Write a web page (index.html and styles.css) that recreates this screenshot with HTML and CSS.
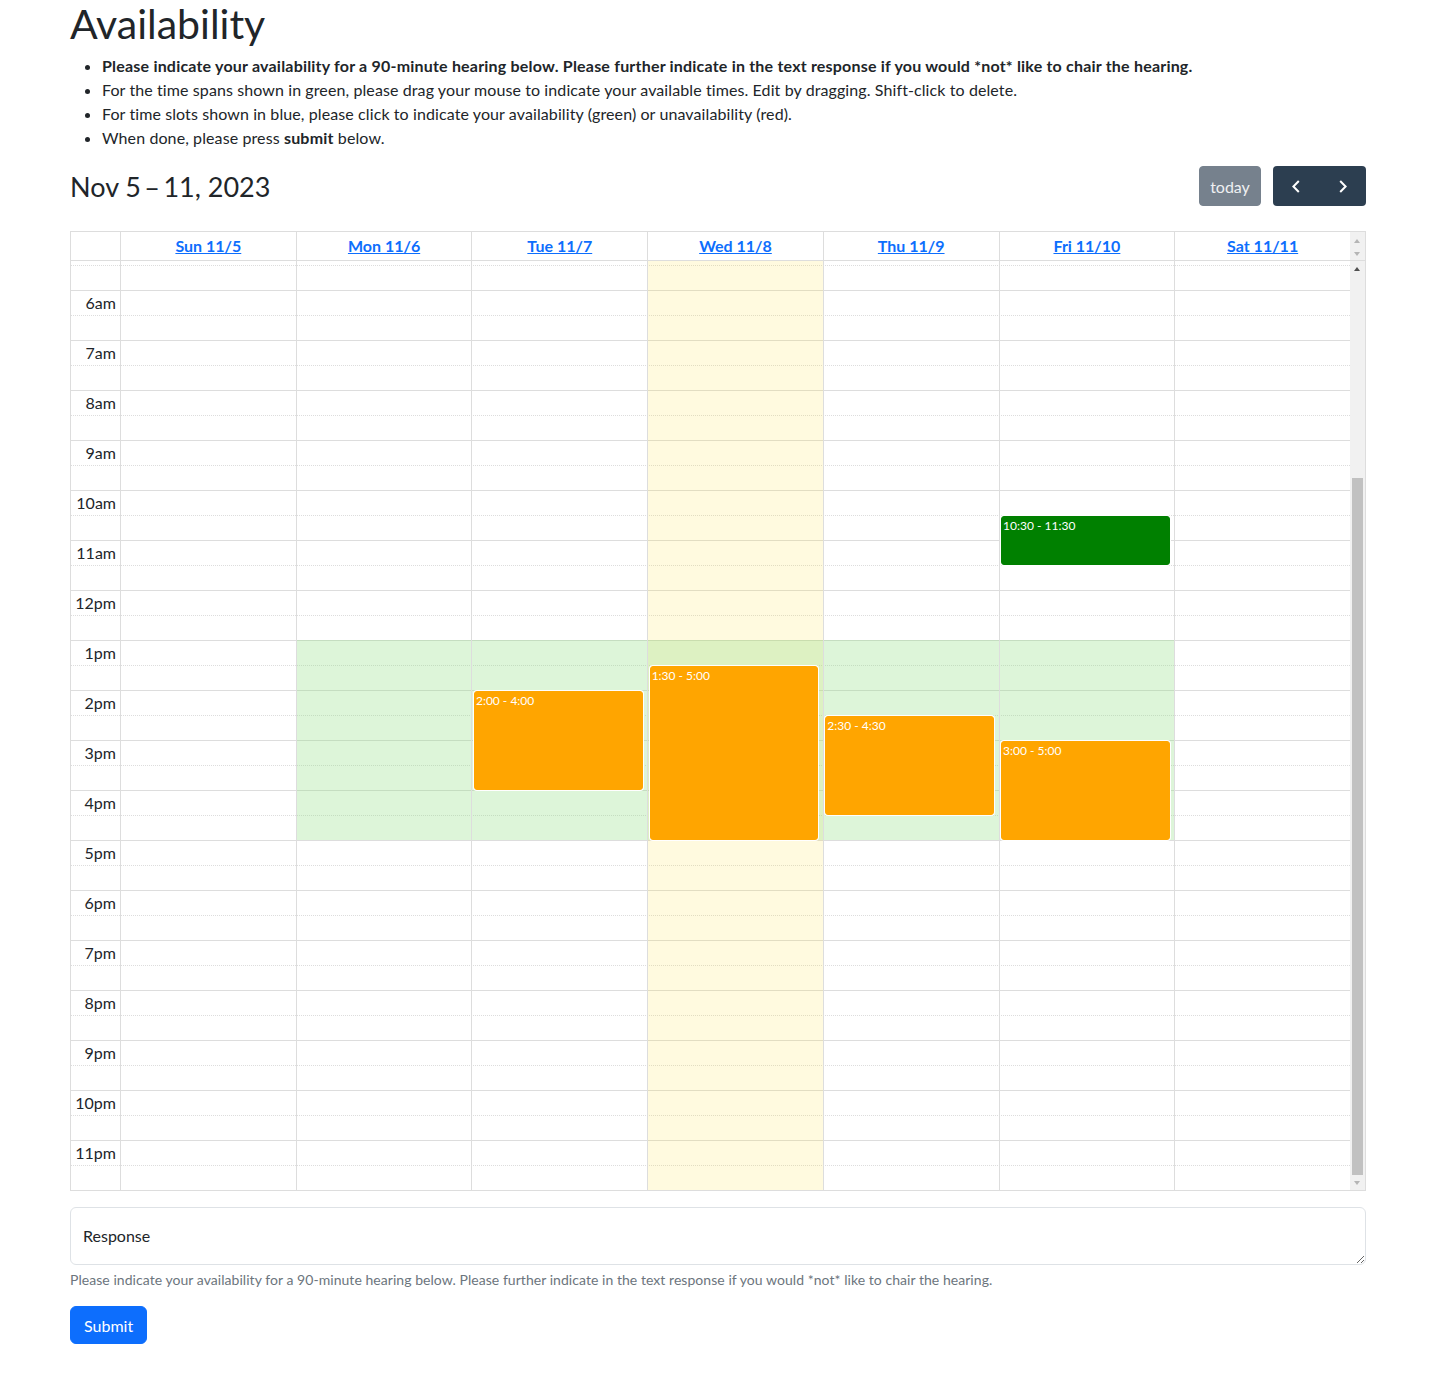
FILE: index.html
```html
<!DOCTYPE html>
<html lang="en">
<head>
<meta charset="utf-8">
<title>Availability</title>
<link rel="stylesheet" href="styles.css">
</head>
<body>
<div class="page">
  <h1 class="title">Availability</h1>
  <ul class="instructions">
    <li><strong>Please indicate your availability for a 90-minute hearing below. Please further indicate in the text response if you would *not* like to chair the hearing.</strong></li>
    <li>For the time spans shown in green, please drag your mouse to indicate your available times. Edit by dragging. Shift-click to delete.</li>
    <li>For time slots shown in blue, please click to indicate your availability (green) or unavailability (red).</li>
    <li>When done, please press <strong>submit</strong> below.</li>
  </ul>

  <div class="toolbar">
    <h2 class="range">Nov 5&thinsp;–&thinsp;11, 2023</h2>
    <div class="tb-right">
      <button class="btn-today" type="button">today</button>
      <div class="btn-group">
        <button class="btn-nav" type="button" aria-label="prev"><svg width="8" height="13" viewBox="0 0 8 13"><path d="M6.8 1 L1.4 6.5 L6.8 12" fill="none" stroke="#fff" stroke-width="2"/></svg></button>
        <button class="btn-nav" type="button" aria-label="next"><svg width="8" height="13" viewBox="0 0 8 13"><path d="M1.2 1 L6.6 6.5 L1.2 12" fill="none" stroke="#fff" stroke-width="2"/></svg></button>
      </div>
    </div>
  </div>

  <div class="cal">
    <div class="cal-head">
      <div class="hcell axis"></div>
      <div class="hcell"><a href="#">Sun 11/5</a></div>
      <div class="hcell"><a href="#">Mon 11/6</a></div>
      <div class="hcell"><a href="#">Tue 11/7</a></div>
      <div class="hcell"><a href="#">Wed 11/8</a></div>
      <div class="hcell"><a href="#">Thu 11/9</a></div>
      <div class="hcell"><a href="#">Fri 11/10</a></div>
      <div class="hcell"><a href="#">Sat 11/11</a></div>
      <div class="hstub"><span class="arr up light"></span><span class="arr down light"></span></div>
    </div>
    <div class="cal-body">
      <div class="scroller">
        <div class="slots">
          <div class="slot hour"></div>
          <div class="slot half"></div>
          <div class="slot hour"><span class="lbl">6am</span></div>
          <div class="slot half"></div>
          <div class="slot hour"><span class="lbl">7am</span></div>
          <div class="slot half"></div>
          <div class="slot hour"><span class="lbl">8am</span></div>
          <div class="slot half"></div>
          <div class="slot hour"><span class="lbl">9am</span></div>
          <div class="slot half"></div>
          <div class="slot hour"><span class="lbl">10am</span></div>
          <div class="slot half"></div>
          <div class="slot hour"><span class="lbl">11am</span></div>
          <div class="slot half"></div>
          <div class="slot hour"><span class="lbl">12pm</span></div>
          <div class="slot half"></div>
          <div class="slot hour"><span class="lbl">1pm</span></div>
          <div class="slot half"></div>
          <div class="slot hour"><span class="lbl">2pm</span></div>
          <div class="slot half"></div>
          <div class="slot hour"><span class="lbl">3pm</span></div>
          <div class="slot half"></div>
          <div class="slot hour"><span class="lbl">4pm</span></div>
          <div class="slot half"></div>
          <div class="slot hour"><span class="lbl">5pm</span></div>
          <div class="slot half"></div>
          <div class="slot hour"><span class="lbl">6pm</span></div>
          <div class="slot half"></div>
          <div class="slot hour"><span class="lbl">7pm</span></div>
          <div class="slot half"></div>
          <div class="slot hour"><span class="lbl">8pm</span></div>
          <div class="slot half"></div>
          <div class="slot hour"><span class="lbl">9pm</span></div>
          <div class="slot half"></div>
          <div class="slot hour"><span class="lbl">10pm</span></div>
          <div class="slot half"></div>
          <div class="slot hour"><span class="lbl">11pm</span></div>
          <div class="slot half"></div>
        </div>
        <div class="cols">
          <div class="col-axis"></div>
          <div class="col"></div>
          <div class="col">
            <div class="bg-green" style="top:379px;height:200px"></div>
          </div>
          <div class="col">
            <div class="bg-green" style="top:379px;height:200px"></div>
            <div class="ev orange" style="top:430px;height:99px">2:00 - 4:00</div>
          </div>
          <div class="col today">
            <div class="bg-green" style="top:379px;height:200px"></div>
            <div class="ev orange" style="top:405px;height:174px">1:30 - 5:00</div>
          </div>
          <div class="col">
            <div class="bg-green" style="top:379px;height:200px"></div>
            <div class="ev orange" style="top:455px;height:99px">2:30 - 4:30</div>
          </div>
          <div class="col">
            <div class="bg-green" style="top:379px;height:200px"></div>
            <div class="ev green" style="top:255px;height:49px">10:30 - 11:30</div>
            <div class="ev orange" style="top:480px;height:99px">3:00 - 5:00</div>
          </div>
          <div class="col"></div>
        </div>
      </div>
      <div class="sb">
        <div class="sb-btn"><span class="arr up dark"></span></div>
        <div class="sb-track"><div class="sb-thumb"></div></div>
        <div class="sb-btn"><span class="arr down light"></span></div>
      </div>
    </div>
  </div>

  <div class="field">
    <textarea class="response" id="response" aria-label="Response"></textarea>
    <label class="field-label" for="response">Response</label>
  </div>
  <div class="help">Please indicate your availability for a 90-minute hearing below. Please further indicate in the text response if you would *not* like to chair the hearing.</div>
  <button class="submit" type="button">Submit</button>
</div>
</body>
</html>
```

FILE: styles.css
```css
* { box-sizing: border-box; }

body {
  margin: 0;
  font-family: "Lato", "Noto Sans", sans-serif;
  font-size: 16px;
  line-height: 1.5;
  color: #212529;
  background: #fff;
}

.page {
  width: 1296px;
  margin-left: 70px;
}

.title {
  margin: 0;
  font-size: 41px;
  font-weight: 400;
  line-height: 48px;
}

.instructions {
  margin: 6px 0 16px;
  padding-left: 32px;
  letter-spacing: 0.1px;
}

.instructions li { line-height: 24px; }
.instructions strong { letter-spacing: 0.2px; }

.toolbar {
  display: flex;
  align-items: center;
  justify-content: space-between;
  height: 40px;
  margin-bottom: 25px;
}

.range {
  margin: 0;
  font-size: 27px;
  font-weight: 400;
  line-height: 1.2;
  padding-top: 2px;
}

.tb-right {
  display: flex;
  gap: 12px;
}

.btn-today {
  height: 40px;
  width: 62px;
  border: 1px solid #76818d;
  border-radius: 4px;
  background: #76818d;
  color: #eef0f2;
  font-family: inherit;
  font-size: 16px;
  padding: 0;
}

.btn-group {
  display: flex;
  background: #2c3e50;
  border-radius: 4px;
}

.btn-nav {
  width: 46.5px;
  height: 40px;
  border: 0;
  background: transparent;
  display: flex;
  align-items: center;
  justify-content: center;
  padding: 0;
}

/* calendar */
.cal {
  border: 1px solid #ddd;
}

.cal-head {
  display: grid;
  grid-template-columns: 49px repeat(7, 1fr) 15px;
  height: 29px;
  border-bottom: 1px solid #ddd;
}

.hcell {
  border-left: 1px solid #ddd;
  text-align: center;
  line-height: 28px;
  font-weight: 700;
}

.hcell.axis { border-left: 0; }

.hcell a {
  color: #0d6efd;
  text-decoration: underline;
}

.hstub {
  background: #f1f1f1;
  position: relative;
}

.cal-body {
  display: flex;
  height: 929px;
}

.scroller {
  flex: 1;
  position: relative;
  overflow: hidden;
}

.slots {
  margin-top: -21px;
}

.slot {
  height: 25px;
  display: flex;
}

.slot.hour { border-top: 1px solid #ddd; }
.slot.half { border-top: 1px dotted #ddd; }

.lbl {
  width: 49px;
  text-align: right;
  padding-right: 4px;
  line-height: 24px;
  white-space: nowrap;
}

.cols {
  position: absolute;
  inset: 0;
  display: grid;
  grid-template-columns: 49px repeat(7, 1fr);
}

.col {
  position: relative;
  border-left: 1px solid #ddd;
}

.col.today { background: rgba(255, 220, 40, 0.15); }

.bg-green {
  position: absolute;
  left: 0;
  right: 0;
  background: rgba(143, 223, 130, 0.3);
}

.ev {
  position: absolute;
  left: 1.5px;
  right: 4.5px;
  border-radius: 3px;
  box-shadow: 0 0 0 1px #fff;
  color: #fff;
  font-size: 12px;
  line-height: 18px;
  padding: 0 1px;
  overflow: hidden;
  white-space: nowrap;
}

.ev.orange { background: #ffa500; border: 1px solid #ffa500; }
.ev.green { background: #008000; border: 1px solid #008000; }

/* scrollbar */
.sb {
  width: 15px;
  background: #f1f1f1;
  display: flex;
  flex-direction: column;
}

.sb-btn {
  height: 15px;
  position: relative;
}

.sb-track {
  flex: 1;
  display: flex;
  flex-direction: column;
}

.sb-thumb {
  flex: 1;
  margin: 202px 2px 0 2px;
  background: #c1c1c1;
}

.arr {
  position: absolute;
  left: 4px;
  width: 0;
  height: 0;
  border-left: 3.5px solid transparent;
  border-right: 3.5px solid transparent;
}

.arr.up { border-bottom: 4px solid #a3a3a3; }
.arr.down { border-top: 4px solid #a3a3a3; }
.arr.up.dark { border-bottom-color: #505050; }
.arr.light.up { border-bottom-color: #b5b5b5; }
.arr.light.down { border-top-color: #b5b5b5; }

.sb-btn .arr { top: 6px; }
.hstub .arr.up { top: 7px; }
.hstub .arr.down { top: 20px; }

/* form */
.field {
  position: relative;
  margin-top: 16px;
}

.response {
  display: block;
  width: 100%;
  height: 58px;
  border: 1px solid #dee2e6;
  border-radius: 6px;
  resize: vertical;
  font-family: inherit;
  font-size: 16px;
  padding: 16px 12px;
  margin: 0;
}

.field-label {
  position: absolute;
  top: 1px;
  left: 1px;
  padding: 16px 12px 0;
  line-height: 24px;
  color: #212529;
  pointer-events: none;
}

.help {
  margin-top: 4px;
  font-size: 14px;
  line-height: 21px;
  color: #6c757d;
  letter-spacing: 0.05px;
}

.submit {
  margin-top: 16px;
  height: 38px;
  padding: 0 13px;
  border: 1px solid #0d6efd;
  border-radius: 6px;
  background: #0d6efd;
  color: #fff;
  font-family: inherit;
  font-size: 16px;
}
```
